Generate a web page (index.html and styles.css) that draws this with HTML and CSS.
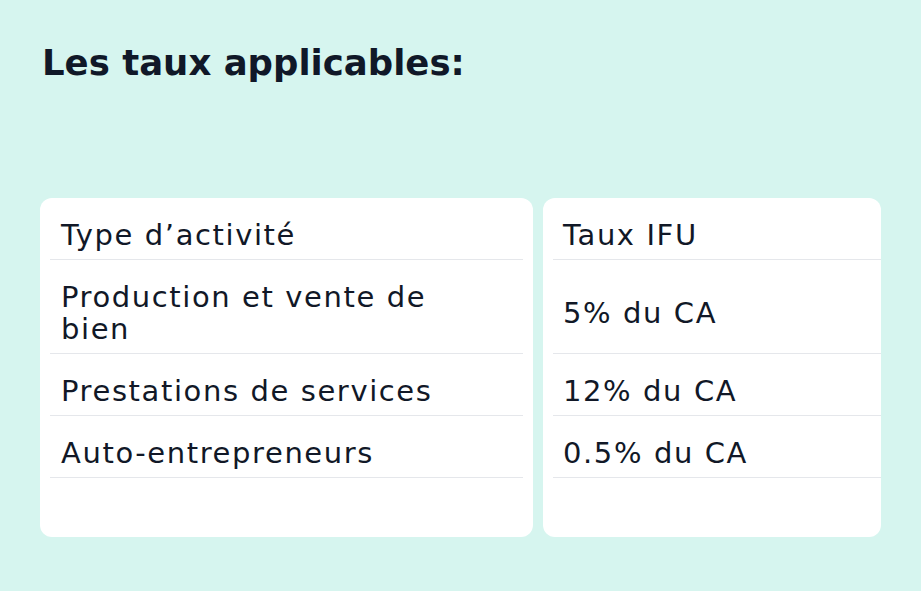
FILE: index.html
```html
<!DOCTYPE html>
<html lang="fr">
<head>
<meta charset="utf-8">
<title>Les taux applicables</title>
<link rel="stylesheet" href="styles.css">
</head>
<body>
<main class="page">
  <h1 class="title">Les taux applicables:</h1>
  <div class="tables">
    <div class="card card-type">
      <div class="row">Type d’activité</div>
      <div class="row row-tall">Production et vente de<br>bien</div>
      <div class="row">Prestations de services</div>
      <div class="row">Auto-entrepreneurs</div>
    </div>
    <div class="card card-rate">
      <div class="row">Taux IFU</div>
      <div class="row row-tall">5% du CA</div>
      <div class="row">12% du CA</div>
      <div class="row">0.5% du CA</div>
    </div>
  </div>
</main>
</body>
</html>
```

FILE: styles.css
```css
* { box-sizing: border-box; }
html, body { margin: 0; padding: 0; }
body {
  background: #d6f5ef;
  font-family: "DejaVu Sans", sans-serif;
  color: #111827;
  width: 921px;
  height: 591px;
  overflow: hidden;
}
.page {
  padding: 40px 40px 0 40px;
}
.title {
  margin: 0 0 0 2px;
  font-size: 35.5px;
  line-height: 46px;
  font-weight: 700;
  color: #101828;
}
.tables {
  margin-top: 112px;
  display: flex;
  gap: 10px;
  align-items: stretch;
}
.card {
  background: #ffffff;
  border-radius: 12px;
  padding: 0 10px 59px 10px;
}
.card-type { width: 493px; }
.card-rate { width: 338px; padding-right: 0; }
.row {
  height: 62px;
  border-bottom: 1px solid #e5e7eb;
  display: flex;
  align-items: center;
  padding: 13px 10px 0 11px;
  font-size: 29px;
  line-height: 30px;
  letter-spacing: 1.6px;
  color: #111827;
}
.card-rate .row { padding-left: 10px; }
.row-tall { height: 94px; line-height: 32px; }
```
